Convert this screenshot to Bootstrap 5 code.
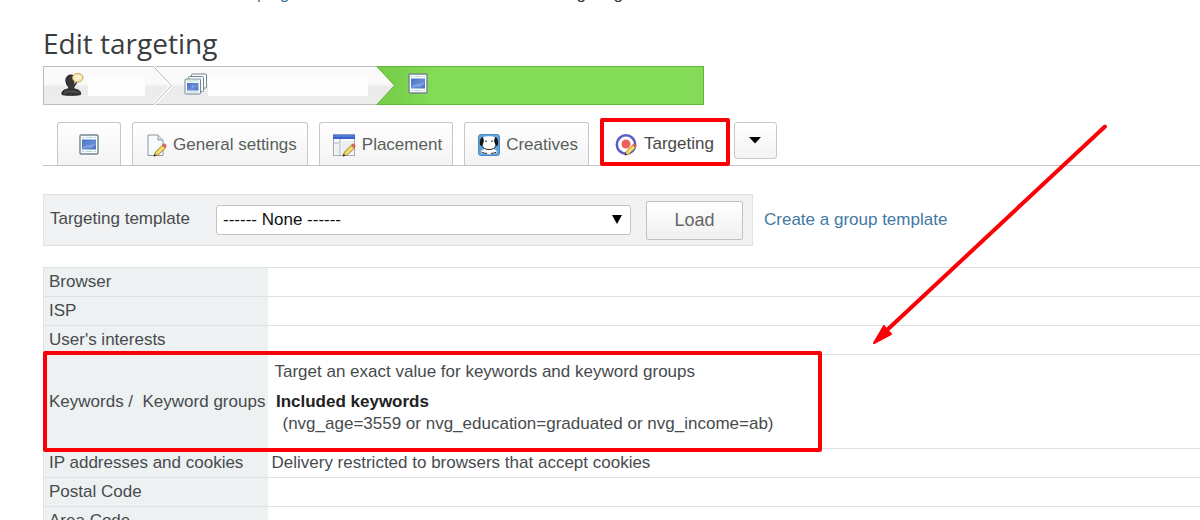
<!DOCTYPE html>
<html lang="en">
<head>
<meta charset="utf-8">
<meta name="viewport" content="width=device-width, initial-scale=1">
<title>Edit targeting</title>
<link href="https://cdn.jsdelivr.net/npm/bootstrap@5.3.0/dist/css/bootstrap.min.css" rel="stylesheet">
<style>
  body { font-family: "Liberation Sans", Arial, sans-serif; font-size: 17px; line-height: 22px; color: #474b4e; overflow-x: hidden; background: #fff; }
  a { color: #4279a3; }
  .page { padding-left: 43px; }
  .trail { margin-top: -17px; padding-left: 182px; gap: 224px; height: 22px; color: #333; }
  h1 { font-family: "Open Sans", sans-serif; font-size: 28px; line-height: 38px; color: #3a3d40; margin: 19px 0 4px; }

  /* Wizard steps */
  .steps { width: 661px; max-width: 100%; height: 39px; border: 1px solid #bdbdbd; background: linear-gradient(#fafafa 0 16px, #f4f4f4 18px, #ebebeb 20px, #ededed); }
  .step-user { width: 109px; padding-left: 16px; }
  .step-campaign { width: 204px; padding-left: 12px; }
  .step-blank { height: 21px; background: #fdfdfd; }
  .step-current { background: linear-gradient(90deg, #78cf4a, #84db57 40px); border: 1px solid #62b43a; border-left: 0; margin: -1px -1px -1px 0; padding-left: 13px; }
  .step-arrow { margin: -1px 0; flex: none; }

  /* Tabs */
  .tab-bar { padding-left: 14px; border-bottom: 1px solid #c4c4c4; height: 48px; margin-top: 13px; }
  .tab-btn { height: 43px; border: 1px solid #c8c8c8; border-bottom: 0; border-radius: 3px 3px 0 0; background: linear-gradient(#fff, #f3f3f3); color: #58605c; padding: 2px 10px 0 13px; gap: 6px; margin-right: 11px; }
  .tab-btn svg { flex: none; }
  .tab-square { width: 64px; padding: 0; }
  .tab-picked { height: 48px; margin: 0 4px -1px 0; padding: 4px 12px 0 11px; gap: 7px; border: 4px solid #fb0007; border-radius: 2px; background: #fff; color: #484848; }
  .tab-more { width: 43px; height: 37px; padding: 0; margin: 4px 0 0; border-bottom: 1px solid #c8c8c8; border-radius: 3px; align-self: flex-start; }

  /* Template picker */
  .picker { margin-top: 28px; gap: 11px; }
  .picker-box { width: 710px; height: 52px; padding: 0 9px 0 6px; background: #f0f2f3; border: 1px solid #dfe2e3; }
  .picker-box label { width: 166px; padding-bottom: 3px; }
  .picker-box select { width: 100%; height: 30px; padding: 0 6px; border: 1px solid #c2c4c6; border-radius: 3px; background: #fff; color: #111; appearance: none; }
  .picker-box .caret { right: 9px; top: 10px; pointer-events: none; }
  .load-btn { width: 97px; height: 39px; margin-left: 15px; border: 1px solid #bfc1c2; border-radius: 2px; background: linear-gradient(#fff, #f0f0f0); color: #666; font-size: 18px; }

  /* Criteria */
  .criteria { margin-top: 21px; width: 100%; table-layout: fixed; border-top: 1px solid #dfe2e3; }
  .criteria th, .criteria td { height: 29px; padding: 0 4px; border-bottom: 1px solid #dfe2e3; white-space: nowrap; }
  .criteria th { width: 224px; padding-left: 5px; background: #edf1f2; border-left: 1px solid #dfe2e3; font-weight: 400; }
  .criteria .tall { height: 94px; }
  .criteria .detail { padding: 6px 7px 0; vertical-align: top; }
  .criteria strong { color: #222; }
  .frame { left: -1px; top: -4px; width: 779px; height: 101px; border: 4px solid #fb0007; border-radius: 2px; pointer-events: none; }
  .pointer { left: 870px; top: 137px; pointer-events: none; }
</style>
</head>
<body>
<svg width="0" height="0" class="position-absolute" aria-hidden="true">
  <defs>
    <linearGradient id="blueShot" x1="0" y1="0" x2="1" y2="1"><stop offset="0" stop-color="#456fc6"/><stop offset=".6" stop-color="#6a8ed6"/><stop offset="1" stop-color="#4a6cc0"/></linearGradient>
    <symbol id="photo" viewBox="0 0 20 21">
      <rect x="1" y="1" width="18" height="19" rx="1" fill="#f8fcfd" stroke="#73868c" stroke-width="1.4"/>
      <path d="M3 3.500h2m1.500 0h7m1.500 0h2M3 17.500h2m1.500 0h7m1.500 0h2" stroke="#b9d5df" stroke-width="1.200"/>
      <rect x="3" y="5.500" width="14" height="10" fill="url(#blueShot)"/>
      <path d="M4 14l4-2 4 1 4-3" stroke="#9bb6ea" fill="none"/><circle cx="12" cy="12" r="1.500" fill="#86a4e3"/>
    </symbol>
    <symbol id="pencil" viewBox="0 0 14 14">
      <path d="M1 13l1.500-4L9.500 2l3 3-7.500 7z" fill="#f2d553" stroke="#8a6f26" stroke-width=".8"/>
      <path d="M9.500 2l1-1c1-.7 3 1 2.500 2.500L12 5z" fill="#e66a66" stroke="#b14a4a" stroke-width=".6"/>
      <path d="M4 11.500L11 4.500" stroke="#fff0a0"/><path d="M.7 13.400l.9-2.600 1.800 1.700z" fill="#2b2b2b"/>
    </symbol>
  </defs>
</svg>

<main class="page position-relative">
  <nav class="trail d-flex" aria-label="Breadcrumb"><a href="#" class="text-decoration-none">campaign</a><span>Edit targeting</span></nav>
  <h1 class="fw-normal">Edit targeting</h1>

  <div class="steps d-flex align-items-stretch">
    <div class="step-user d-flex align-items-center">
      <svg width="24" height="24" viewBox="0 0 24 24" aria-label="Account" class="mb-1">
        <path d="M2 22.500c-.5-3.500 1.500-4.500 6-5.500.9-.8.9-1.800 0-3C5 11 4.500 3 11 3s7 8 3.500 11c-.9 1.200-.9 2.200 0 3 4.500 1 6.500 2 6 5.500-2 1-16.500 1-18.500 0z" fill="#383838" stroke="#1c1c1c"/>
        <path d="M4 21c2-2 12-2 14.500 0" stroke="#5c5c5c" fill="none"/>
        <path d="M18 1.500c3 0 5 1.700 5 4.200s-2 4.300-5 4.300l-1.500-.2-2 1.700V9c-1.200-.8-2-1.800-2-3.300 0-2.500 2.500-4.200 5.500-4.200z" fill="#f9e8b8" stroke="#c9a55a"/>
        <path d="M15.500 4.500h5M15.500 6.500h4" stroke="#fff9e4"/>
      </svg>
      <div class="step-blank flex-grow-1 ms-1 me-2"></div>
    </div>
    <svg class="step-arrow" width="19" height="39" viewBox="0 0 19 39" aria-hidden="true"><path d="M0 0L18.500 19.500 0 39" fill="none" stroke="#fff" stroke-width="3"/><path d="M0 0L18.500 19.500 0 39" fill="none" stroke="#b5b5b5"/></svg>
    <div class="step-campaign d-flex align-items-center">
      <svg width="24" height="22" viewBox="0 0 24 22" aria-label="Campaign" class="mb-1">
        <g fill="#f8fcfd" stroke="#73868c"><rect x="7.500" y="1" width="15" height="14" rx="1"/><rect x="4.500" y="3.500" width="15" height="15" rx="1"/><rect x="1" y="6" width="15.500" height="15" rx="1"/></g>
        <path d="M3 8h11M3 19h11M6.500 5.500h11" stroke="#b9d5df"/>
        <rect x="3" y="10" width="11.500" height="7.500" fill="url(#blueShot)"/><circle cx="9" cy="13.500" r="1.300" fill="#86a4e3"/>
      </svg>
      <div class="step-blank flex-grow-1 me-2"></div>
    </div>
    <svg class="step-arrow" width="19" height="39" viewBox="0 0 19 39" aria-hidden="true"><path d="M0 0h19v39H0L18.500 19.500z" fill="#78cf4a"/><path d="M19 .5H1L18.500 19.500 1 38.500h18" fill="none" stroke="#62b43a"/></svg>
    <div class="step-current flex-grow-1 d-flex align-items-center">
      <svg width="20" height="21" class="mb-1" aria-label="Placement"><use href="#photo"/></svg>
    </div>
  </div>

  <div class="tab-bar d-flex align-items-end">
    <button type="button" class="tab-btn tab-square d-flex align-items-center justify-content-center" aria-label="Overview"><svg width="20" height="21"><use href="#photo"/></svg></button>
    <button type="button" class="tab-btn d-flex align-items-center">
      <svg width="21" height="23" viewBox="0 0 21 23"><path d="M2 1h10l5 5v15.500H2z" fill="#f5fafa" stroke="#8b989d"/><path d="M12 1v5h5" fill="#dbe8ec" stroke="#8b989d"/><use href="#pencil" x="7" y="9" width="14" height="14"/></svg>General settings</button>
    <button type="button" class="tab-btn d-flex align-items-center">
      <svg width="23" height="23" viewBox="0 0 23 23"><rect x=".5" y="1" width="21" height="20.500" fill="#f7f8fa" stroke="#a2a7b0"/><path d="M0 .5h22V5H0z" fill="#3c62cb"/><path d="M1 2h20" stroke="#6f90e6"/><path d="M7 5v16M1 9h5" stroke="#aab0ba"/><path d="M2 11h4v9H2zM9 7h11v13H9z" fill="#eceef2"/><use href="#pencil" x="9" y="9" width="14" height="14"/></svg>Placement</button>
    <button type="button" class="tab-btn d-flex align-items-center">
      <svg width="22" height="22" viewBox="0 0 22 22"><rect x=".5" y=".5" width="21" height="21" rx="2.500" fill="#62a3dc" stroke="#4a8ac6"/><path d="M5 3c3-1 9-1 12 0l2 5-2 3-1 4 3 2v2c-4 1.500-12 1.500-16 0v-2l3-2-1-4-2-3z" fill="#fff"/><path d="M5 3C2 4 1.500 7 2 11l2 1.500L6 7zM17 3c3 1 3.500 4 3 8l-2 1.500L16 7z" fill="#161616"/><path d="M8 6.500v1.500M14 6.500v1.500" stroke="#111" stroke-width="1.200"/><path d="M4.500 12.500c1 4 12 4 13 0M3.500 18c2 1.500 4 1 5.500 1.500M18.500 18c-2 1.500-4 1-5.500 1.500" stroke="#222" fill="none"/></svg>Creatives</button>
    <button type="button" class="tab-btn tab-picked d-flex align-items-center" aria-current="page">
      <svg width="22" height="23" viewBox="0 0 22 23"><circle cx="11" cy="11.500" r="9.200" fill="#fff" stroke="#5a5ccc" stroke-width="2.500"/><circle cx="11" cy="11" r="4.500" fill="#f2605e"/><use href="#pencil" x="9" y="10" width="13" height="13"/></svg>Targeting</button>
    <button type="button" class="tab-btn tab-more d-flex align-items-center justify-content-center" aria-label="More"><svg width="12" height="7" viewBox="0 0 12 7"><path d="M0 0h12L6 6.500z" fill="#000"/></svg></button>
  </div>

  <form class="picker d-flex align-items-center">
    <div class="picker-box d-flex align-items-center">
      <label for="template" class="flex-shrink-0">Targeting template</label>
      <div class="position-relative flex-grow-1">
        <select id="template" class="d-block"><option>------ None ------</option></select>
        <svg class="caret position-absolute" width="10" height="9" viewBox="0 0 10 9" aria-hidden="true"><path d="M0 0h10L5 9z" fill="#000"/></svg>
      </div>
      <button type="button" class="load-btn flex-shrink-0">Load</button>
    </div>
    <a href="#" class="text-decoration-none">Create a group template</a>
  </form>

  <table class="criteria">
    <tbody>
      <tr><th scope="row">Browser</th><td></td></tr>
      <tr><th scope="row">ISP</th><td></td></tr>
      <tr><th scope="row">User's interests</th><td></td></tr>
      <tr><th scope="row" class="tall position-relative">Keywords /&nbsp; Keyword groups<div class="frame position-absolute"></div></th>
        <td class="detail"><div class="mb-2">Target an exact value for keywords and keyword groups</div><strong class="d-block">&#8202;Included keywords</strong><div class="ps-2">(nvg_age=3559 or nvg_education=graduated or nvg_income=ab)</div></td></tr>
      <tr><th scope="row">IP addresses and cookies</th><td>Delivery restricted to browsers that accept cookies</td></tr>
      <tr><th scope="row">Postal Code</th><td></td></tr>
      <tr><th scope="row">Area Code</th><td></td></tr>
    </tbody>
  </table>

  <svg class="pointer position-absolute" width="240" height="228" viewBox="0 0 240 228" aria-hidden="true"><path d="M235 6.500L16 211" stroke="#fb0007" stroke-width="4" stroke-linecap="round"/><path d="M4 223L14 206l3 4 4 4z" fill="#fb0007" stroke="#fb0007" stroke-width="2" stroke-linejoin="round"/></svg>
</main>
<script src="https://cdn.jsdelivr.net/npm/bootstrap@5.3.0/dist/js/bootstrap.bundle.min.js"></script>
</body>
</html>
